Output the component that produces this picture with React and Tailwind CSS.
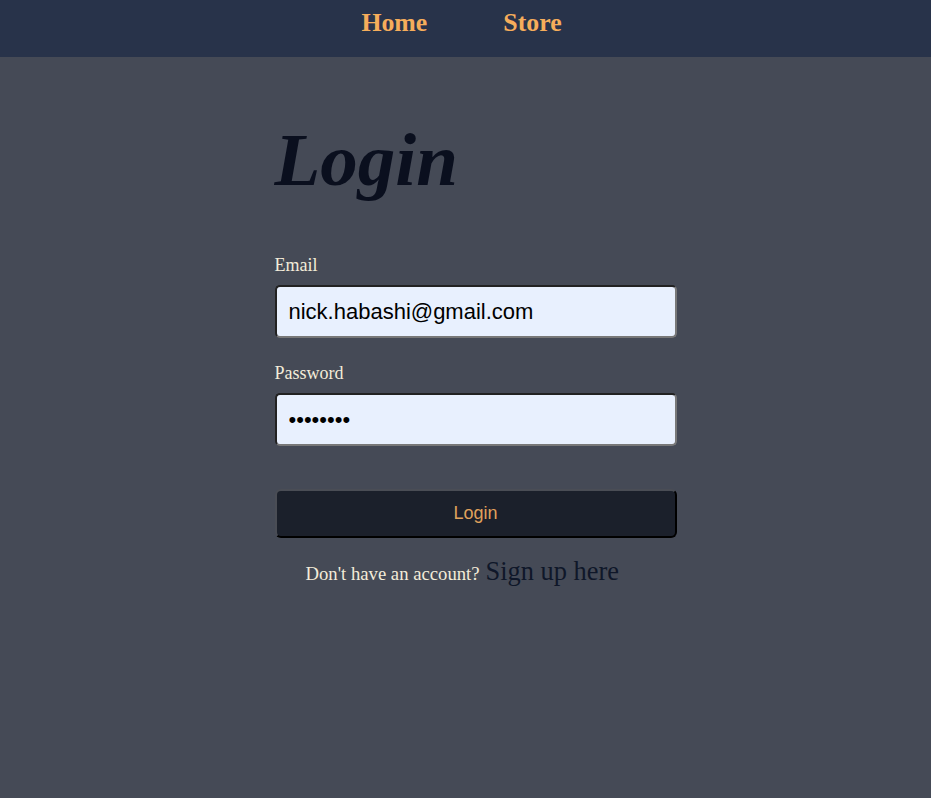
import React from 'react';

const serif = 'font-["Liberation_Serif",serif]';
const sans = 'font-["Liberation_Sans",Arial,sans-serif]';

const Navbar = () => {
  return (
    <nav className={`h-[57px] bg-[#28334a] flex justify-center items-start pt-[8px] gap-[76px] pr-[8px] ${serif}`}>
      <a href="#" className="text-[25.8px] font-bold text-[#f6ad5b] leading-[30px]">Home</a>
      <a href="#" className="text-[25.8px] font-bold text-[#f6ad5b] leading-[30px]">Store</a>
    </nav>
  );
};

const App = () => {
  return (
    <div className="min-h-screen bg-[#454a56]">
      <Navbar />
      <div className="flex justify-center pl-[20px]">
        <form className="w-[402px] flex flex-col" onSubmit={(e) => e.preventDefault()}>
          <h1 className={`mt-[65px] h-[72px] text-[75px] leading-none font-bold italic text-[#0a0f1e] ${serif}`}>Login</h1>

          <label className={`mt-[61px] text-[18px] leading-[21px] text-[#f3ecd9] ${serif}`}>Email</label>
          <input
            type="email"
            readOnly
            value="nick.habashi@gmail.com"
            className={`mt-[9px] h-[53px] w-full rounded-[5px] bg-[#e8f0fe] px-[12px] text-[22px] text-black outline-none border-2 border-t-[#222] border-l-[#222] border-r-[#787878] border-b-[#787878] ${sans}`}
          />

          <label className={`mt-[25px] text-[18px] leading-[21px] text-[#f3ecd9] ${serif}`}>Password</label>
          <input
            type="password"
            readOnly
            value="12345678"
            className={`mt-[9px] h-[53px] w-full rounded-[5px] bg-[#e8f0fe] px-[12px] text-[22px] text-black outline-none border-2 border-t-[#222] border-l-[#222] border-r-[#787878] border-b-[#787878] ${sans}`}
          />

          <button
            type="submit"
            className={`mt-[43px] h-[49px] w-full rounded-[6px] bg-[#1b202b] text-[18px] text-[#e0a25c] border-2 border-t-[#4a4d55] border-l-[#4a4d55] border-r-black border-b-black ${sans}`}
          >
            Login
          </button>

          <div className={`mt-[20px] pl-[31px] flex items-baseline gap-[6px] ${serif}`}>
            <span className="text-[18.7px] leading-none text-[#f3ecd9]">Don't have an account?</span>
            <a href="#" className="text-[26.4px] leading-none text-[#0f1729]">Sign up here</a>
          </div>
        </form>
      </div>
    </div>
  );
};

export default App;
